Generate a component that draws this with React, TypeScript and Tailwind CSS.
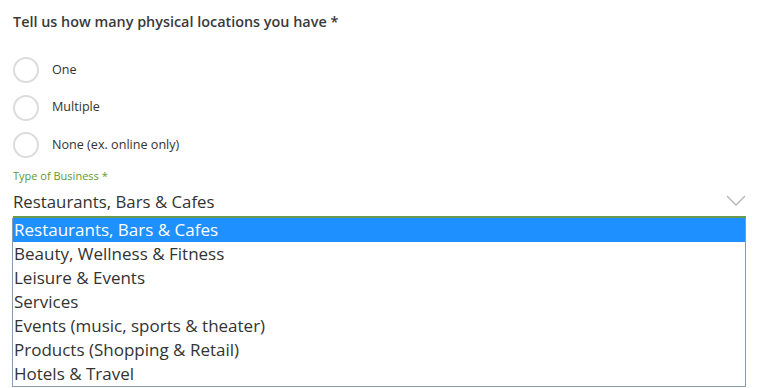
import React from 'react';

const radios = ['One', 'Multiple', 'None (ex. online only)'];

const businessTypes = [
  'Restaurants, Bars & Cafes',
  'Beauty, Wellness & Fitness',
  'Leisure & Events',
  'Services',
  'Events (music, sports & theater)',
  'Products (Shopping & Retail)',
  'Hotels & Travel',
];

const RadioOption: React.FC<{ label: string }> = ({ label }) => (
  <label className="flex items-center h-[26px]">
    <span className="w-[26px] h-[26px] rounded-full border-2 border-[#dcdcdc] bg-white" />
    <span className="ml-[13px] text-[12.6px] text-[#333]">{label}</span>
  </label>
);

const App: React.FC = () => {
  return (
    <div
      className="w-[761px] h-[388px] bg-white overflow-hidden pt-[12px] px-[12px]"
      style={{ fontFamily: '"Open Sans", "Noto Sans", sans-serif' }}
    >
      <h3 className="ml-[1px] text-[14.4px] leading-[20px] font-semibold text-[#3a3a3a]">
        Tell us how many physical locations you have *
      </h3>

      <div className="ml-[1px] mt-[25px] flex flex-col gap-[11.5px]">
        {radios.map((r) => (
          <RadioOption key={r} label={r} />
        ))}
      </div>

      <div className="ml-[1px] mt-[11px] text-[11px] leading-[14px] text-[#5f9a2e]">
        Type of Business *
      </div>

      <div className="ml-[1px] w-[733px] flex items-start justify-between pt-[7px] pb-[2px] border-b-2 border-[#6a9a52]">
        <span className="text-[16.8px] leading-[24px] text-[#333]">Restaurants, Bars &amp; Cafes</span>
        <svg className="w-[20px] h-[12px] mt-[5px]" viewBox="0 0 20 12" fill="none">
          <path d="M1 1l9 9 9-9" stroke="#b5b5b5" strokeWidth="1.3" />
        </svg>
      </div>

      <ul className="w-[734px] border border-t-0 border-[#8a9bb0] bg-white">
        {businessTypes.map((b, i) => (
          <li
            key={b}
            className={
              i === 0
                ? 'h-[24px] leading-[24px] pl-[1px] text-[17px] bg-[#1e90ff] text-white'
                : 'h-[24px] leading-[24px] pl-[1px] text-[17px] text-[#333]'
            }
          >
            {b}
          </li>
        ))}
      </ul>
    </div>
  );
};

export default App;
